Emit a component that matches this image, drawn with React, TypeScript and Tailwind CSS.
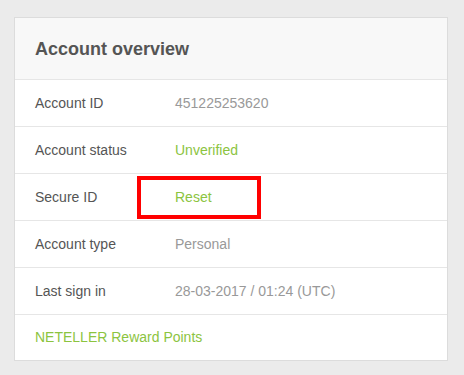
import React from "react";

const rows: { label: string; value: string; green?: boolean; box?: boolean }[] = [
  { label: "Account ID", value: "451225253620" },
  { label: "Account status", value: "Unverified", green: true },
  { label: "Secure ID", value: "Reset", green: true, box: true },
  { label: "Account type", value: "Personal" },
  { label: "Last sign in", value: "28-03-2017 / 01:24 (UTC)" },
];

export default function App() {
  return (
    <div
      className="w-[464px] h-[375px] bg-[#ebebeb] pt-[17px] pl-[14px]"
      style={{ fontFamily: '"Liberation Sans", Arial, sans-serif' }}
    >
      <div className="w-[434px] border border-[#dcdcdc] bg-white">
        <div className="h-[62px] bg-[#f8f8f8] border-b border-[#e6e6e6] flex items-center pl-[20px] pt-[2px]">
          <span className="text-[18px] font-bold text-[#555555]">Account overview</span>
        </div>
        {rows.map((r) => (
          <div
            key={r.label}
            className="relative h-[47px] border-b border-[#e6e6e6] flex items-center pl-[20px] text-[14px]"
          >
            <span className="w-[140px] text-[#555555]">{r.label}</span>
            <span className={r.green ? "text-[#8cc43f]" : "text-[#999999]"}>{r.value}</span>
            {r.box && (
              <div className="absolute left-[122px] top-[2px] w-[124px] h-[43px] border-4 border-[#ff0000]" />
            )}
          </div>
        ))}
        <div className="h-[45px] flex items-center pl-[20px] text-[14px] text-[#8cc43f]">
          NETELLER Reward Points
        </div>
      </div>
    </div>
  );
}
